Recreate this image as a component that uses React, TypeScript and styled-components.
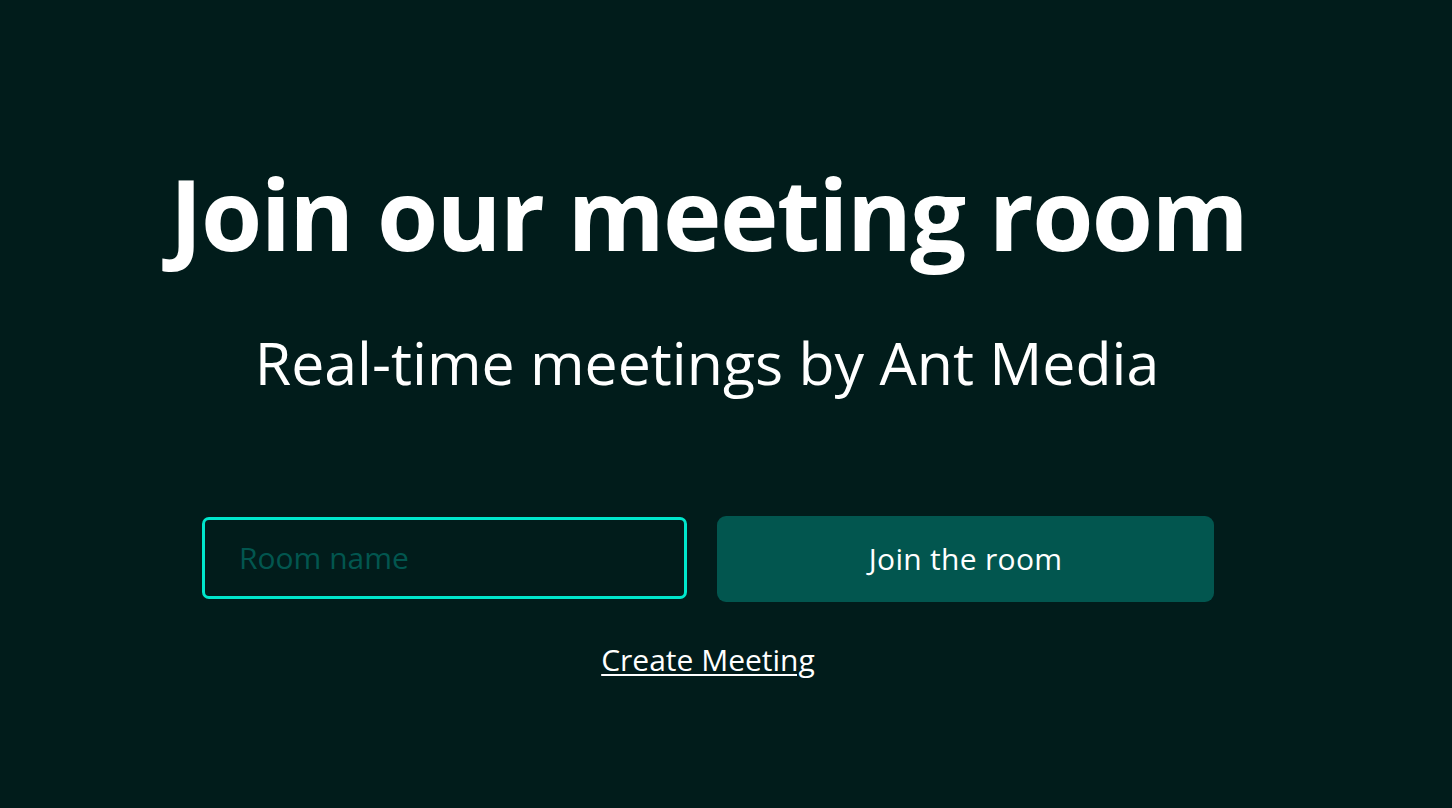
import React from "react";
import styled, { createGlobalStyle } from "styled-components";

const Global = createGlobalStyle`
  html, body { margin: 0; padding: 0; background: #011c1b; }
  body { font-family: "Open Sans", "Noto Sans", sans-serif; color: #ffffff; }
  * { box-sizing: border-box; }
`;

const Page = styled.main`
  width: 100%;
  height: 808px;
  background: #011c1b;
  display: flex;
  flex-direction: column;
  align-items: center;
  padding: 154px 38px 0 0;
`;

const Title = styled.h1`
  margin: 0;
  padding-left: 3px;
  font-size: 99px;
  font-weight: 700;
  line-height: 1.2;
  letter-spacing: -1.6px;
  color: #ffffff;
`;

const Subtitle = styled.p`
  margin: 54px 0 0;
  font-size: 59px;
  font-weight: 400;
  line-height: 1.2;
  color: #ffffff;
`;

const Form = styled.div`
  margin-top: 118px;
  display: flex;
  align-items: flex-start;
  gap: 30px;
  padding-left: 2px;
`;

const RoomInput = styled.input`
  width: 485px;
  height: 82px;
  margin-top: 1px;
  border: 3px solid #00e6cc;
  border-radius: 7px;
  background: #011c1b;
  padding: 0 20px 0 34px;
  font-family: "Open Sans", sans-serif;
  font-size: 30px;
  color: #ffffff;
  caret-color: #ffffff;
  outline: none;
  &::placeholder { color: #02564f; }
`;

const JoinButton = styled.button`
  width: 497px;
  height: 86px;
  border: none;
  border-radius: 9px;
  background: #02564f;
  color: #ffffff;
  font-family: "Open Sans", sans-serif;
  font-size: 30px;
  font-weight: 500;
  letter-spacing: 0.3px;
  cursor: pointer;
`;

const CreateLink = styled.a`
  margin-top: 40px;
  padding-left: 2px;
  font-size: 30px;
  line-height: 1.2;
  color: #ffffff;
  text-decoration: underline;
  text-underline-offset: 3px;
  text-decoration-thickness: 2px;
  cursor: pointer;
`;

export default function App() {
  return (
    <>
      <Global />
      <Page>
        <Title>Join our meeting room</Title>
        <Subtitle>Real-time meetings by Ant Media</Subtitle>
        <Form>
          <RoomInput placeholder="Room name" autoFocus />
          <JoinButton>Join the room</JoinButton>
        </Form>
        <CreateLink>Create Meeting</CreateLink>
      </Page>
    </>
  );
}
